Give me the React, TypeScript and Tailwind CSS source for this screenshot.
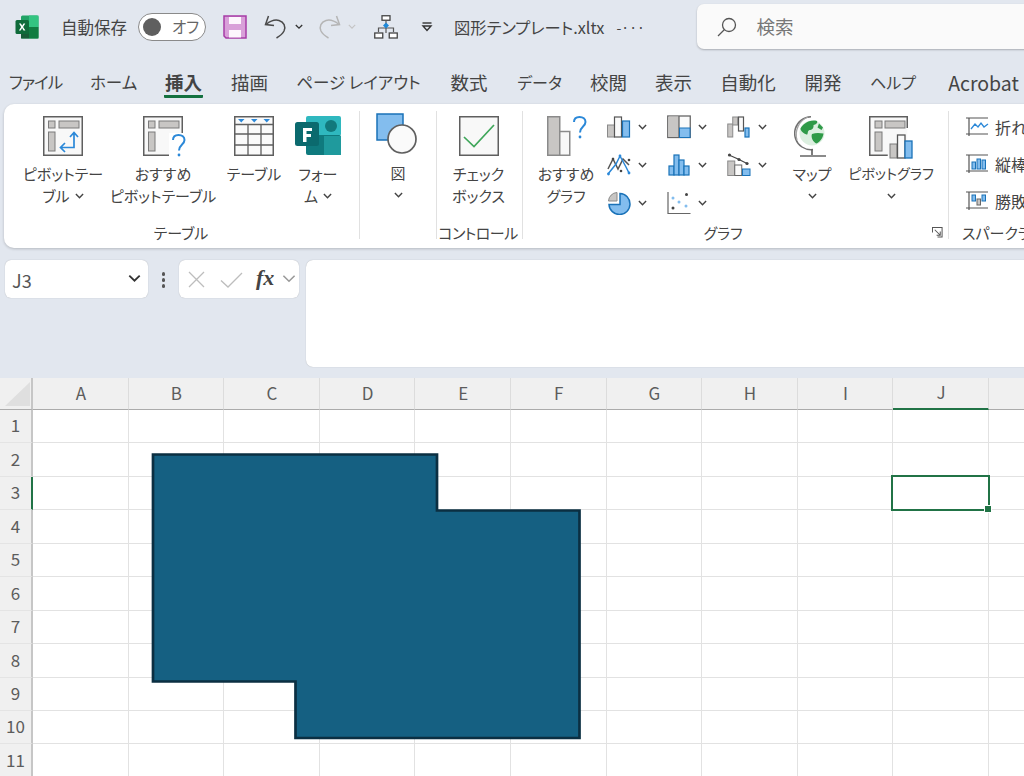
import React from "react";

const G = "#5f5f5f";
const F = "#c8c6c4";
const B = "#2b88d8";
const L = "#83bdee";
const D = "#1a72b8";

const Chevron = ({ c = "#444", w = 10, s = 1.6 }: { c?: string; w?: number; s?: number }) => (
  <svg width={w} height={w * 0.7} viewBox="0 0 10 7" className="shrink-0">
    <path d="M1 1.200 5 5.200 9 1.200" fill="none" stroke={c} strokeWidth={s} />
  </svg>
);

const Cells = () => (
  <>
    <rect x="5.500" y="5" width="6.500" height="7" fill={F} stroke="#7a7a7a" />
    <rect x="16" y="5" width="20" height="7" fill={F} stroke="#7a7a7a" />
    <rect x="5.500" y="16" width="6.500" height="19" fill={F} stroke="#7a7a7a" />
  </>
);

const PivotIcon = () => (
  <svg width="40" height="41" viewBox="0 0 40 41">
    <rect x=".75" y=".75" width="38.500" height="38.500" fill="#f8f8f8" stroke={G} strokeWidth="1.500" />
    <Cells />
    <path d="M31 17v14.500H18.500M27 21l4-4.500 4 4.500M22 27l-4.500 4.500 4.500 4.500" fill="none" stroke={B} strokeWidth="1.700" />
  </svg>
);

const Question = ({ x, y, s = 1 }: { x: number; y: number; s?: number }) => (
  <g transform={`translate(${x} ${y}) scale(${s})`}>
    <path d="M1 6C1 2.500 3.500 1 6.500 1 10 1 12.500 3 12.500 6 12.500 10.500 7 10.500 7 16.500" fill="none" stroke={B} strokeWidth="2" />
    <circle cx="7" cy="21" r="1.400" fill={B} />
  </g>
);

const PivotAsk = () => (
  <svg width="46" height="48" viewBox="0 0 46 48" className="-mr-[6px] mb-[-7px] overflow-visible">
    <rect x=".75" y=".75" width="38.500" height="38.500" fill="#f8f8f8" />
    <rect x="26" y="17" width="14" height="24" fill="#fff" />
    <path d="M39.250 17V.75H.75v38.500H26" fill="none" stroke={G} strokeWidth="1.500" />
    <Cells />
    <Question x={29} y={18} />
  </svg>
);

const TableIcon = () => (
  <svg width="40" height="41" viewBox="0 0 40 41">
    <rect x=".75" y=".75" width="38.500" height="38.500" fill="#fafafa" stroke={G} strokeWidth="1.500" />
    <path d="M1 8.500h38M1 18h38M1 29h38M14 8.500V39M27 8.500V39" stroke={G} strokeWidth="1.300" fill="none" />
    <path d="M4 3h6.500L7.250 6.500zM17 3h6.500l-3.250 3.500zM29.500 3H36l-3.250 3.500z" fill={B} />
  </svg>
);

const FormsIcon = () => (
  <svg width="46" height="41" viewBox="0 0 46 41">
    <rect x="11" y="0" width="35" height="20" rx="2" fill="#2fb8bf" />
    <rect x="11" y="19" width="35" height="20" rx="2" fill="#0f7a7e" />
    <rect x="29" y="20" width="17" height="19" fill="#1f9a9d" />
    <circle cx="36" cy="10" r="6" fill="#12797c" />
    <rect x="0" y="6" width="24" height="24" rx="2.500" fill="#0b6a6e" />
    <path d="M8 12h9v3h-5.500v3H16v3h-4.500v5H8z" fill="#fff" />
  </svg>
);

const ShapesIcon = () => (
  <svg width="42" height="42" viewBox="0 0 42 42">
    <rect x="1" y="1" width="26" height="26" fill={L} stroke={D} strokeWidth="1.500" />
    <circle cx="26" cy="26" r="14" fill="#fafafa" stroke={G} strokeWidth="1.700" />
  </svg>
);

const CheckIcon = () => (
  <svg width="40" height="41" viewBox="0 0 40 41">
    <rect x=".75" y=".75" width="38.500" height="38.500" fill="#f8f8f8" stroke={G} strokeWidth="1.500" />
    <path d="M5 21l10 9.500L35 9" fill="none" stroke="#3fa65a" strokeWidth="1.700" />
  </svg>
);

const RecommendChart = () => (
  <svg width="40" height="41" viewBox="0 0 40 41" className="ml-[1px]">
    <rect x=".75" y=".75" width="12" height="38.500" fill={F} stroke="#8a8a8a" strokeWidth="1.500" />
    <rect x="12.750" y="15.500" width="10" height="23.750" fill="#f8f8f8" stroke="#8a8a8a" strokeWidth="1.500" />
    <Question x={26} y={0} s={1} />
  </svg>
);

const SmallBars = () => (
  <svg width="24" height="24" viewBox="0 0 24 24">
    <rect x=".5" y="10" width="7" height="12" fill={F} stroke="#8a8a8a" />
    <rect x="7.500" y="2" width="7" height="20" fill="#fafafa" stroke="#555" strokeWidth="1.200" />
    <rect x="15.500" y="6" width="7" height="16" fill={L} stroke={D} strokeWidth="1.200" />
  </svg>
);
const SmallLine = () => (
  <svg width="24" height="24" viewBox="0 0 24 24">
    <path d="M1 16 6 6l5 10 5-10 6 6" fill="none" stroke="#555" strokeWidth="1.500" />
    <path d="M1 21 9 11l4-8 6 11 3 6" fill="none" stroke={B} strokeWidth="1.500" />
    <circle cx="1.500" cy="21" r="1.400" fill={B} /><circle cx="13" cy="3" r="1.400" fill={B} /><circle cx="22" cy="20" r="1.400" fill={B} />
    <circle cx="6" cy="6" r="1.300" fill="#444" /><circle cx="22" cy="7" r="1.300" fill="#444" />
    <circle cx="14" cy="18" r="1.300" fill="#444" />
  </svg>
);
const SmallPie = () => (
  <svg width="24" height="24" viewBox="0 0 24 24">
    <path d="M13 2.500A10.500 10.500 0 1 1 2 13.500h11z" fill={L} stroke={D} strokeWidth="1.500" />
    <path d="M10 1.500V10H1.500A9 9 0 0 1 10 1.500z" fill={F} stroke="#8a8a8a" />
  </svg>
);
const SmallTreemap = () => (
  <svg width="24" height="24" viewBox="0 0 24 24">
    <rect x=".75" y="1" width="22.500" height="21.500" fill="#fafafa" stroke="#666" strokeWidth="1.300" />
    <rect x="1.500" y="1.500" width="10.500" height="20.500" fill={F} />
    <path d="M12 1v21.500" stroke="#666" strokeWidth="1.300" />
    <rect x="12.500" y="13" width="10.500" height="9.500" fill={L} stroke={D} />
  </svg>
);
const SmallHist = () => (
  <svg width="24" height="24" viewBox="0 0 24 24">
    <g fill={L} stroke={D} strokeWidth="1.200">
      <rect x="2" y="13" width="5" height="9" />
      <rect x="7" y="2" width="5" height="20" />
      <rect x="12" y="7" width="5" height="15" />
      <rect x="17" y="13" width="5" height="9" />
    </g>
  </svg>
);
const SmallScatter = () => (
  <svg width="24" height="24" viewBox="0 0 24 24">
    <path d="M1 1v21.500h22.500" fill="none" stroke="#666" strokeWidth="1.200" />
    <circle cx="6" cy="17" r="1.500" fill="#444" /><circle cx="19.500" cy="3.500" r="1.500" fill="#444" />
    <circle cx="6" cy="7" r="1.500" fill={L} /><circle cx="12" cy="11" r="1.500" fill={L} /><circle cx="19" cy="15" r="1.500" fill={L} />
  </svg>
);
const SmallWaterfall = () => (
  <svg width="24" height="24" viewBox="0 0 24 24">
    <rect x=".75" y="9" width="5" height="13" fill={F} stroke="#8a8a8a" />
    <rect x="5.750" y="2" width="5" height="8" fill={F} stroke="#8a8a8a" />
    <rect x="11.500" y="2" width="5" height="14" fill="#fafafa" stroke="#555" strokeWidth="1.200" />
    <rect x="18" y="13" width="4" height="9" fill={L} stroke={D} strokeWidth="1.200" />
  </svg>
);
const SmallFunnel = () => (
  <svg width="24" height="24" viewBox="0 0 24 24">
    <rect x=".75" y="8" width="7" height="14.500" fill={F} stroke="#8a8a8a" />
    <rect x="7.750" y="12" width="7" height="10.500" fill="#fafafa" stroke="#666" />
    <rect x="15.500" y="16" width="7.500" height="6.500" fill={L} stroke={D} />
    <path d="M2 2l9 4 10 5" fill="none" stroke="#444" strokeWidth="1.200" />
    <circle cx="2.500" cy="2" r="1.600" fill="#444" /><circle cx="12" cy="6.500" r="1.600" fill="#444" /><circle cx="20" cy="10.500" r="1.600" fill="#444" />
  </svg>
);

const Globe = () => (
  <svg width="36" height="44" viewBox="0 0 36 44">
    <circle cx="18" cy="17" r="12.500" fill="#dcefe0" />
    <path d="M11 7.500c3-2.500 8-3.500 12-2.500 1 2-1 3.500-3.500 4 .5 3-1.500 5-4 5-2.500 1-1 5-3 4.500-3-1-6-3.500-6-6 1-2 2.500-4 4.500-5zM18 18c4-1.500 8-1 11.500-.5-.5 4-3 8-7 10-3-1-6-6-4.500-9.500zM25 7.500l4 4-1.500 2.500-4-2.500z" fill="#2f9a48" />
    <path d="M17 .8A16.500 16.500 0 0 0 8 31a16.500 16.500 0 0 0 11 2.500" fill="none" stroke="#707070" strokeWidth="1.500" />
    <path d="M14 1A19 19 0 0 0 3 24" fill="none" stroke="#a5a5a5" strokeWidth="1.300" />
    <path d="M18 33v6M6 40h26" stroke="#666" strokeWidth="1.700" />
  </svg>
);

const PivotChart = () => (
  <svg width="44" height="45" viewBox="0 0 44 45">
    <rect x=".75" y=".75" width="37.500" height="38.500" fill="#f8f8f8" />
    <path d="M38.250 12V.75H.75v38.500h18" fill="none" stroke={G} strokeWidth="1.500" />
    <rect x="6" y="5" width="7" height="7" fill={F} stroke="#7a7a7a" />
    <rect x="16" y="5" width="20" height="7" fill={F} stroke="#7a7a7a" />
    <rect x="6" y="16" width="7" height="19" fill={F} stroke="#7a7a7a" />
    <rect x="21" y="28" width="7" height="14" fill={F} stroke="#7a7a7a" />
    <rect x="28.500" y="19" width="7.500" height="23" fill="#fafafa" stroke="#555" strokeWidth="1.300" />
    <rect x="36" y="25" width="7" height="17" fill={L} stroke={D} strokeWidth="1.300" />
  </svg>
);

const Spark = ({ kind }: { kind: "line" | "col" | "wl" }) => (
  <svg width="24" height="22" viewBox="0 0 24 22">
    <path d="M1 2h22M1 18h22M4 2v18" fill="none" stroke="#555" strokeWidth="1.200" />
    {kind === "line" && <path d="M6 13l4-5 3 3 3-4 3 4 4-3" fill="none" stroke={B} strokeWidth="1.300" />}
    {kind === "col" && (
      <g fill={L} stroke={D}><rect x="7" y="9" width="3.500" height="7" /><rect x="12" y="6" width="3.500" height="10" /><rect x="17" y="7" width="3.500" height="9" /></g>
    )}
    {kind === "wl" && (
      <g><rect x="7" y="5" width="3.500" height="6" fill={L} stroke={D} /><rect x="12" y="9" width="3.500" height="6" fill={F} stroke="#666" /><rect x="17" y="5" width="3.500" height="6" fill={L} stroke={D} /></g>
    )}
  </svg>
);

const Btn = ({ w, icon, lines, chevronLine }: { w: string; icon: React.ReactNode; lines: string[]; chevronLine?: boolean }) => (
  <div className={`${w} flex flex-col items-center pt-[5px]`}>
    <div className="h-[41px] flex items-start justify-center">{icon}</div>
    <div className="mt-[6px] text-center whitespace-nowrap">
      {lines.map((l, i) => (
        <div key={i} className="flex items-center justify-center gap-[5px] h-[22px] leading-[22px]">
          {l}
          {chevronLine && i === lines.length - 1 && <Chevron w={9} />}
        </div>
      ))}
    </div>
  </div>
);

const ChevBelow = () => (
  <div className="h-[23px] flex items-center justify-center"><Chevron w={9} /></div>
);

const Group = ({ w, label, labelClass = "", children, last }: { w: string; label: string; labelClass?: string; children: React.ReactNode; last?: boolean }) => (
  <div className={`${w} h-[128px] shrink-0 flex flex-col ${last ? "" : "border-r border-[#e1e1e1]"}`}>
    <div className="h-[111px] shrink-0 flex">{children}</div>
    <div className={`h-[22px] shrink-0 leading-[22px] text-[15px] whitespace-nowrap ${labelClass || "text-center"}`}>{label}</div>
  </div>
);

const Mini = ({ icon }: { icon: React.ReactNode }) => (
  <div className="flex items-center gap-[7px] h-[24px]">
    {icon}
    <Chevron w={9} />
  </div>
);

const TABS = [
  ["ファイル", "w-[53px] text-[16.500px] tracking-[-1px]"],
  ["ホーム", "w-[46px] text-[16.500px]"],
  ["挿入", "w-[39px] text-[18.500px]"],
  ["描画", "w-[37px] text-[18.500px]"],
  ["ページ レイアウト", "w-[125px] text-[16.500px]"],
  ["数式", "w-[40px] text-[18.500px]"],
  ["データ", "w-[45px] text-[16px]"],
  ["校閲", "w-[37px] text-[18.500px]"],
  ["表示", "w-[37px] text-[18.500px]"],
  ["自動化", "w-[56px] text-[18.500px]"],
  ["開発", "w-[38px] text-[18.500px]"],
  ["ヘルプ", "w-[44px] text-[16px]"],
  ["Acrobat", "w-[71px] ml-[6px] text-[19.500px]"],
];

const COLS = ["A", "B", "C", "D", "E", "F", "G", "H", "I", "J", "K"];
const ROWS = [1, 2, 3, 4, 5, 6, 7, 8, 9, 10, 11];

export default function App() {
  return (
    <div className="relative w-[1024px] h-[776px] overflow-hidden bg-[#e2e7ef] text-[#444] text-[15px] font-['Noto_Sans_CJK_JP','Noto_Sans',sans-serif] [font-feature-settings:'palt']">
      {/* title bar */}
      <div className="h-[54px] flex items-center whitespace-nowrap">
        <svg width="24" height="24" viewBox="0 0 24 24" className="ml-[15px] shrink-0">
          <rect x="6" y="0.500" width="17.500" height="23" rx="1.500" fill="#21a366" />
          <rect x="14" y="0.500" width="9.500" height="11.500" fill="#33c481" />
          <rect x="14" y="12" width="9.500" height="11.500" fill="#107c41" />
          <rect x="6" y="12" width="8" height="11.500" fill="#185c37" />
          <rect x="0.500" y="5" width="13.500" height="14" rx="1.500" fill="#0f6b3a" />
          <path d="M4 8.500h1.900l1.300 2.300 1.300-2.300h1.800l-2.200 3.500 2.300 3.500H8.500l-1.400-2.400-1.400 2.400H3.900L6.200 12z" fill="#fff" />
        </svg>
        <span className="ml-[22px] w-[67px] text-[16.500px]">自動保存</span>
        <div className="ml-[11px] w-[68px] h-[28px] rounded-full bg-white border border-[#8a8a8a] flex items-center pl-[4px] shrink-0">
          <span className="w-[18px] h-[18px] rounded-full bg-[#5f5f5f]" />
          <span className="ml-[11px] text-[15.500px] text-[#666]">オフ</span>
        </div>
        <svg width="24" height="24" viewBox="0 0 24 24" className="ml-[17px] shrink-0">
          <path d="M1 1h22v22H3l-2-2z" fill="#d9a0d9" stroke="#a63ca6" strokeWidth="1.500" />
          <rect x="6" y="2" width="12" height="7" fill="#fdf6fd" />
          <rect x="6" y="15" width="12" height="7.500" fill="#fdf6fd" />
        </svg>
        <svg width="24" height="24" viewBox="0 0 24 24" className="ml-[17px] shrink-0">
          <path d="M2 9.500c5-4 9.500-5 13-4 5 1.500 7 6 5 10.500-1.500 3-4 5-7.500 7" fill="none" stroke="#4a4a4a" strokeWidth="1.500" />
          <path d="M4.500 1 1.500 9.500l8.500 1" fill="none" stroke="#4a4a4a" strokeWidth="1.500" />
        </svg>
        <span className="ml-[7px]"><Chevron w={8} s={1.700} c="#333" /></span>
        <svg width="24" height="24" viewBox="0 0 24 24" className="ml-[14px] shrink-0">
          <path d="M22 9.500c-5-4-9.500-5-13-4-5 1.500-7 6-5 10.500 1.500 3 4 5 7.500 7" fill="none" stroke="#b5b5b5" strokeWidth="1.500" />
          <path d="M19.500 1l3 8.500-8.500 1" fill="none" stroke="#b5b5b5" strokeWidth="1.500" />
        </svg>
        <span className="ml-[7px]"><Chevron w={8} s={1.400} c="#c4c4c4" /></span>
        <svg width="24" height="24" viewBox="0 0 24 24" className="ml-[18px] shrink-0">
          <path d="M12 6v12M4.500 17v-4h15v4" fill="none" stroke="#555" strokeWidth="1.200" />
          <rect x="8" y="0.750" width="8" height="4.500" fill="#fff" stroke="#444" strokeWidth="1.300" />
          <rect x="0.750" y="18" width="8" height="5" fill="#fff" stroke="#444" strokeWidth="1.300" />
          <rect x="15.250" y="18" width="8" height="5" fill="#fff" stroke="#444" strokeWidth="1.300" />
          <path d="M12 7.500l3 3-3 3-3-3z" fill="#1e88d8" />
        </svg>
        <svg width="12" height="10" viewBox="0 0 12 10" className="ml-[23px] shrink-0">
          <path d="M1.500 1h9" stroke="#333" strokeWidth="1.400" />
          <path d="M2 4h8L6 8.500z" fill="none" stroke="#333" strokeWidth="1.400" />
        </svg>
        <span className="ml-[21px] w-[151px] text-[16.300px]">図形テンプレート.xltx</span>
        <span className="ml-[12px] w-[24px] text-[14px]">-···</span>
        <div className="ml-[57px] w-[340px] h-[45px] -mt-[1px] shrink-0 rounded-l-[7px] bg-[#fafafa] shadow-[0_1px_2px_rgba(0,0,0,.25)] flex items-center pl-[20px]">
          <svg width="20" height="20" viewBox="0 0 20 20">
            <circle cx="12" cy="8" r="6.500" fill="none" stroke="#555" strokeWidth="1.300" />
            <path d="M7.500 12.500 1 19" stroke="#555" strokeWidth="1.300" />
          </svg>
          <span className="ml-[19px] text-[18.500px] text-[#777]">検索</span>
        </div>
      </div>

      {/* tabs */}
      <div className="h-[50px] pt-[15px] pl-[9px] flex gap-[28px] whitespace-nowrap">
        {TABS.map(([t, w]) => (
          <div
            key={t}
            className={`${w} shrink-0 h-[29px] leading-[27px] text-center ${t === "挿入" ? "font-bold border-b-[3px] border-[#14713f] rounded-[1px]" : ""}`}
          >
            {t}
          </div>
        ))}
      </div>

      {/* ribbon */}
      <div className="ml-[4px] w-[1040px] h-[144px] bg-white rounded-l-[10px] shadow-[0_1px_3px_rgba(0,0,0,.2)] pt-[7px] flex items-start">
        <Group w="w-[356px]" label="テーブル" labelClass="text-center pr-[1px]">
          <div className="w-[11px]" />
          <Btn w="w-[96px]" icon={<PivotIcon />} lines={["ピボットテー", "ブル"]} chevronLine />
          <Btn w="w-[104px]" icon={<PivotAsk />} lines={["おすすめ", "ピボットテーブル"]} />
          <Btn w="w-[78px]" icon={<TableIcon />} lines={["テーブル"]} />
          <Btn w="w-[50px]" icon={<FormsIcon />} lines={["フォー", "ム"]} chevronLine />
        </Group>
        <Group w="w-[77px]" label="">
          <div className="w-full flex flex-col items-center pt-[2px]">
            <div className="h-[44px] ml-[-2px]"><ShapesIcon /></div>
            <div className="mt-[4px] h-[23px] leading-[23px]">図</div>
            <ChevBelow />
          </div>
        </Group>
        <Group w="w-[86px]" label="コントロール" labelClass="text-center tracking-[-0.5px] pr-[3px]">
          <Btn w="w-[83px]" icon={<CheckIcon />} lines={["チェック", "ボックス"]} />
        </Group>
        <div className="relative shrink-0 h-[128px]">
          <Group w="w-[426px]" label="グラフ" labelClass="text-center pr-[25px]">
            <div className="w-[14px]" />
            <Btn w="w-[58px]" icon={<RecommendChart />} lines={["おすすめ", "グラフ"]} />
            <div className="w-[12px]" />
            <div className="grid grid-cols-[60px_60px_60px] grid-rows-[24px_24px_24px] gap-y-[14px] pt-[4px] h-fit">
              <Mini icon={<SmallBars />} />
              <Mini icon={<SmallTreemap />} />
              <Mini icon={<SmallWaterfall />} />
              <Mini icon={<SmallLine />} />
              <Mini icon={<SmallHist />} />
              <Mini icon={<SmallFunnel />} />
              <Mini icon={<SmallPie />} />
              <Mini icon={<SmallScatter />} />
            </div>
            <div className="w-[48px] flex flex-col items-center pt-[5px] ml-[1px]">
              <div className="h-[46px]"><Globe /></div>
              <div className="h-[23px] leading-[23px] whitespace-nowrap">マップ</div>
              <ChevBelow />
            </div>
            <div className="w-[104px] flex flex-col items-center pt-[5px] ml-[3px]">
              <div className="h-[46px]"><PivotChart /></div>
              <div className="h-[23px] leading-[23px] whitespace-nowrap text-[14.200px]">ピボットグラフ</div>
              <ChevBelow />
            </div>
          </Group>
          <svg width="11" height="11" viewBox="0 0 12 12" className="absolute right-[6px] bottom-[1px]">
            <path d="M.5 6V.5H11V11H6M3 3l6 6M9 5v4H5" fill="none" stroke="#555" strokeWidth="1.100" />
          </svg>
        </div>
        <Group w="w-[100px]" label="スパークライン" labelClass="pl-[13px]" last>
          <div className="pl-[16px] pt-[4px] flex flex-col gap-[13px] whitespace-nowrap">
            {([["line", "折れ線"], ["col", "縦棒"], ["wl", "勝敗"]] as const).map(([k, t]) => (
              <div key={k} className="flex items-center gap-[6px] h-[24px] text-[16px]">
                <Spark kind={k} />
                <span>{t}</span>
              </div>
            ))}
          </div>
        </Group>
      </div>

      {/* formula bar */}
      <div className="h-[130px] pt-[12px] pl-[5px] flex items-start">
        <div className="w-[143px] h-[38px] bg-white rounded-[6px] shadow-[0_0_1px_rgba(0,0,0,.3)] flex items-center justify-between pl-[7px] pr-[7px] shrink-0">
          <span className="text-[18px] text-[#555] mt-[3px]">J3</span>
          <Chevron w={13} c="#333" s={1.400} />
        </div>
        <div className="w-[31px] h-[38px] flex flex-col items-center pt-[12px] gap-[2.500px] shrink-0">
          <span className="w-[3.500px] h-[3.500px] rounded-full bg-[#555]" />
          <span className="w-[3.500px] h-[3.500px] rounded-full bg-[#555]" />
          <span className="w-[3.500px] h-[3.500px] rounded-full bg-[#555]" />
        </div>
        <div className="w-[120px] h-[38px] bg-white rounded-[6px] shadow-[0_0_1px_rgba(0,0,0,.3)] flex items-center pl-[9px] shrink-0">
          <svg width="17" height="17" viewBox="0 0 17 17"><path d="M1 1l15 15M16 1 1 16" stroke="#bdbdbd" strokeWidth="1.300" /></svg>
          <svg width="23" height="17" viewBox="0 0 23 17" className="ml-[15px]"><path d="M1 9.500 8 16 22 2" fill="none" stroke="#bdbdbd" strokeWidth="1.300" /></svg>
          <span className="ml-[13px] text-[22px] leading-none font-bold italic text-[#444] font-['Liberation_Serif',serif] -mt-[3px]">fx</span>
          <span className="ml-[8px]"><Chevron w={14} c="#999" s={1.100} /></span>
        </div>
        <div className="ml-[7px] w-[730px] h-[107px] bg-white rounded-l-[7px] shadow-[0_0_1px_rgba(0,0,0,.3)] shrink-0" />
      </div>

      {/* sheet */}
      <div className="bg-white">
        <div className="grid grid-cols-[33px_repeat(11,95.600px)] grid-rows-[32px_repeat(11,33.450px)]">
          <div className="bg-[#f0f0f0] border-b border-[#ababab] border-r-2 border-r-[#c6c6c6] flex items-end pl-[5px] pb-[3px]">
            <svg width="25" height="24" viewBox="0 0 25 24"><path d="M25 0v24H0z" fill="#dfdfdf" /></svg>
          </div>
          {COLS.map((c) => (
            <div
              key={c}
              className={`bg-[#f0f0f0] border-r border-[#dcdcdc] flex items-center justify-center pl-[1px] pb-[2px] text-[17px] text-[#5c5c5c] ${c === "J" ? "border-b-[2px] border-b-[#217346]" : "border-b border-b-[#ababab]"}`}
            >
              {c}
            </div>
          ))}
          {ROWS.map((r) => (
            <React.Fragment key={r}>
              <div
                className={`bg-[#f0f0f0] border-b border-[#e4e4e4] flex items-center justify-center pb-[2px] text-[17px] text-[#5c5c5c] ${r === 3 ? "border-r-2 border-r-[#217346]" : "border-r-2 border-r-[#c6c6c6]"}`}
              >
                {r}
              </div>
              {COLS.map((c) => (
                <div key={c} className="border-r border-b border-[#e2e2e2]" />
              ))}
            </React.Fragment>
          ))}
        </div>
      </div>

      {/* selected cell */}
      <div className="absolute left-[891px] top-[475px] w-[99px] h-[36px] border-2 border-[#217346]">
        <span className="absolute -right-[4px] -bottom-[4px] w-[6px] h-[6px] bg-[#217346] border border-white box-content" />
      </div>

      {/* drawn shape */}
      <svg width="1024" height="776" viewBox="0 0 1024 776" className="absolute left-0 top-0 pointer-events-none">
        <path
          d="M153 454.500H437V510.500H579.500V738H295.500V681.500H153Z"
          fill="#156082"
          stroke="#0b2f42"
          strokeWidth="2.700"
        />
      </svg>
    </div>
  );
}
